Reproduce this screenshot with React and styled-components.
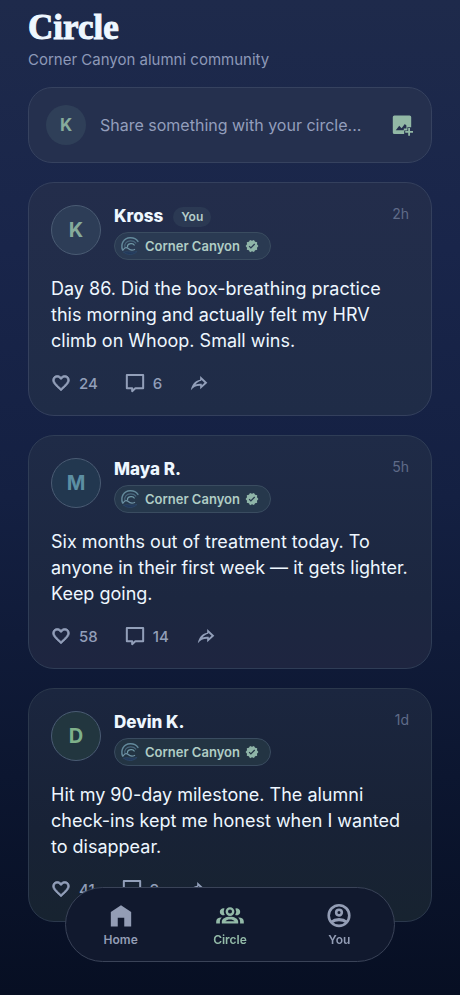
import React, { useState } from 'react';
import styled, { createGlobalStyle } from 'styled-components';

const GlobalStyle = createGlobalStyle`
  *, *::before, *::after {
    box-sizing: border-box;
  }

  body {
    margin: 0;
    background: #070f23;
    color: #eef7ff;
    font-family: Inter, "Liberation Sans", sans-serif;
  }

  button, input {
    font: inherit;
    color: inherit;
  }

  h1, h2, p {
    margin: 0;
  }
`;

const Page = styled.main`
  min-height: 100vh;
  padding: 10px 28px 72px;
  background: linear-gradient(180deg, #1e2a4b 0%, #19254a 25%, #142042 50%, #0c1630 78%, #070f23 100%);
`;

const Title = styled.h1`
  font-family: "Liberation Serif", serif;
  font-size: 35px;
  font-weight: 700;
  line-height: 36px;
  -webkit-text-stroke: 1px #eef7ff;
`;

const Subtitle = styled.p`
  margin-top: 4px;
  font-size: 15px;
  line-height: 20px;
  color: #8d99b8;
`;

const Feed = styled.div`
  display: flex;
  flex-direction: column;
  gap: 19px;
  margin-top: 17px;
`;

const Composer = styled.form`
  display: flex;
  align-items: center;
  gap: 14px;
  padding: 17px;
  border: 1px solid #36425f;
  border-radius: 24px;
  background: #25304e;
`;

const Avatar = styled.span`
  display: flex;
  flex: none;
  align-items: center;
  justify-content: center;
  width: ${({ $small }) => ($small ? 40 : 50)}px;
  height: ${({ $small }) => ($small ? 40 : 50)}px;
  border: ${({ $small }) => ($small ? '0' : '1px solid #4a5b73')};
  border-radius: 50%;
  background: ${({ $tint }) => $tint || '#2f3f58'};
  color: ${({ $color }) => $color || '#86ab9b'};
  font-size: ${({ $small }) => ($small ? 17 : 20)}px;
  font-weight: 700;
`;

const ShareInput = styled.input`
  flex: 1;
  min-width: 0;
  padding: 0;
  border: 0;
  outline: 0;
  background: none;
  font-size: 16px;
  line-height: 24px;

  &::placeholder {
    color: #939ebc;
    opacity: 1;
  }
`;

const IconButton = styled.button`
  display: flex;
  padding: 0;
  border: 0;
  background: none;
  color: #92b8a5;
  cursor: pointer;
`;

const Card = styled.article`
  padding: 22px;
  border: 1px solid ${({ $line }) => $line};
  border-radius: 26px;
  background: ${({ $fill }) => $fill};
`;

const CardHeader = styled.header`
  display: flex;
  align-items: flex-start;
  gap: 13px;
`;

const Author = styled.div`
  display: flex;
  flex: 1;
  flex-direction: column;
  align-items: flex-start;
  gap: 4px;
`;

const NameRow = styled.div`
  display: flex;
  align-items: center;
  gap: 10px;
  height: 23px;
`;

const Name = styled.h2`
  font-size: 17px;
  font-weight: 800;
  line-height: 23px;
`;

const YouChip = styled.span`
  padding: 0 8px;
  border-radius: 10px;
  background: #2b3953;
  color: #b5cdca;
  font-size: 12px;
  font-weight: 600;
  line-height: 20px;
`;

const Community = styled.span`
  display: flex;
  align-items: center;
  gap: 5px;
  height: 28px;
  padding: 0 11px 0 5px;
  border: 1px solid #3a4c60;
  border-radius: 14px;
  background: ${({ $tint }) => $tint};
  color: #b0cdc5;
  font-size: 13px;
  font-weight: 600;
`;

const Time = styled.time`
  color: #5f6b88;
  font-size: 14px;
  line-height: 18px;
`;

const Body = styled.p`
  margin-top: 16px;
  font-size: 18px;
  line-height: 26px;
`;

const Actions = styled.div`
  display: flex;
  align-items: center;
  gap: 27px;
  margin-top: 19px;
`;

const Action = styled.button`
  display: flex;
  align-items: center;
  gap: 8px;
  height: 20px;
  padding: 0;
  border: 0;
  background: none;
  color: #929fb9;
  font-size: 15px;
  font-weight: 500;
  cursor: pointer;
`;

const TabBar = styled.nav`
  position: fixed;
  right: 65px;
  bottom: 33px;
  left: 65px;
  display: flex;
  padding: 15px 0 12px;
  border: 1px solid #3a4358;
  border-radius: 38px;
  background: #11192e;
`;

const Tab = styled.a`
  display: flex;
  flex: 1;
  flex-direction: column;
  align-items: center;
  gap: 2px;
  color: ${({ $active }) => ($active ? '#93baa8' : '#939db5')};
  font-size: 12px;
  font-weight: 600;
  line-height: 18px;
  text-decoration: none;
`;

const Svg = ({ size = 20, children, ...rest }) => (
    <svg width={size} height={size} viewBox="0 0 24 24" fill="currentColor" aria-hidden="true" {...rest}>
        {children}
    </svg>
);

const HeartIcon = () => (
    <Svg>
        <path d="M16.5 3c-1.74 0-3.41.81-4.5 2.09C10.91 3.81 9.24 3 7.5 3 4.42 3 2 5.42 2 8.5c0 3.78 3.4 6.86 8.55 11.54L12 21.35l1.45-1.32C18.6 15.36 22 12.28 22 8.5 22 5.42 19.58 3 16.5 3zm-4.4 15.55l-.1.1-.1-.1C7.14 14.24 4 11.39 4 8.5 4 6.5 5.5 5 7.5 5c1.54 0 3.04.99 3.57 2.36h1.87C13.46 5.99 14.96 5 16.5 5c2 0 3.5 1.5 3.5 3.5 0 2.89-3.14 5.74-7.9 10.05z" stroke="currentColor" strokeWidth="0.9" />
    </Svg>
);

const CommentIcon = () => (
    <Svg fill="none" stroke="currentColor" strokeWidth="2.4" strokeLinejoin="round">
        <path d="M2.2 2.4h19.6v16h-9.4l-3.8 3.4v-3.4H2.2z" />
    </Svg>
);

const ShareIcon = () => (
    <Svg>
        <path fillRule="evenodd" d="M13.4 3.6L22 11.6L13.4 19.4V15.4C8.6 15.3 5.4 16.8 2.2 20.8C3.4 14 7 9 13.4 8zM14.8 9.4C11.6 10.2 9.4 11.6 7.8 13.8C10.2 13 12.2 12.8 15.3 13V14.6L18.6 11.6L14.8 8.2z" />
    </Svg>
);

const AddImageIcon = () => (
    <Svg size={24}>
        <path fillRule="evenodd" d="M4.4 2.4H19.6Q21.2 2.4 21.2 4V14.2H17.4V17.6H14.2V21H4.4Q2.8 21 2.8 19.4V4Q2.8 2.4 4.4 2.4zM5.8 17.2H13.8V15.4H16.4V12.6L14.8 11L11.6 15.2L9.2 12.8z" />
        <path d="M18.2 15H20V18H23V19.8H20V22.8H18.2V19.8H15.2V18H18.2z" />
    </Svg>
);

const VerifiedIcon = () => (
    <Svg size={14} fill="#8fb5a8">
        <path fillRule="evenodd" d="M23 12l-2.44-2.79.34-3.69-3.61-.82-1.89-3.2L12 2.96 8.6 1.5 6.71 4.69 3.1 5.5l.34 3.7L1 12l2.44 2.79-.34 3.7 3.61.82L8.6 22.5l3.4-1.47 3.4 1.46 1.89-3.19 3.61-.82-.34-3.69L23 12zm-12.91 4.72l-3.8-3.81 1.48-1.48 2.32 2.33 5.85-5.87 1.48 1.48-7.33 7.35z" />
    </Svg>
);

const CanyonLogo = () => (
    <Svg size={20} fill="none" strokeLinecap="round">
        <path d="M3 16.500C0.500 9.500 4.500 2.500 12 2.200C16 2 19.500 3.500 21.500 6.500" stroke="#63899b" strokeWidth="1.8" />
        <path d="M6 14C4.500 9.500 8 6 12.500 5.900C15 5.800 17.500 6.600 19 8.500" stroke="#48677d" strokeWidth="1.400" />
        <path d="M9 13C8.500 10.500 11 8.800 14 9.200C15.500 9.400 16.500 10 17 10.800" stroke="#6f98a6" strokeWidth="1.600" />
        <path d="M3.500 17C5.500 14 7.500 13 9.500 14.800S14 17.800 17.500 16.200" stroke="#6f93a5" strokeWidth="1.500" />
        <path d="M4.500 19.500C8 17.500 11 20.500 20.500 18.500C16.500 23 9 23.500 4.500 19.500z" fill="#22385a" stroke="#2d4767" strokeWidth="1" />
    </Svg>
);

const HomeIcon = () => (
    <Svg size={26}>
        <path d="M2.600 21.600V8.400L12 2L21.400 8.400V21.600H15V13.600H9V21.600z" />
    </Svg>
);

// wider than the other tab icons, same height
const GroupIcon = () => (
    <svg width="28" height="26" viewBox="0 0 28 26" fill="currentColor" aria-hidden="true">
        <circle cx="14" cy="8.600" r="3.200" fill="none" stroke="currentColor" strokeWidth="2.400" />
        <path d="M8.600 5.600A3.500 3.500 0 1 0 8.800 12A6.400 6.400 0 0 1 8.600 5.600zM19.400 5.600A3.500 3.500 0 1 1 19.200 12A6.400 6.400 0 0 0 19.400 5.600z" />
        <path fillRule="evenodd" d="M5.800 20.600V18.800C5.800 15.800 9.400 13.800 14 13.800S22.200 15.800 22.200 18.800V20.600zM9.400 18.300H18.600C17.600 17.200 16 16.600 14 16.600S10.400 17.200 9.400 18.300z" />
        <path d="M0.200 20.600V18.400C0.200 16 2.400 14.400 5.800 14.600C4.400 15.800 3.900 17.200 3.900 18.800V20.600zM27.800 20.600V18.400C27.800 16 25.600 14.400 22.200 14.600C23.600 15.800 24.100 17.200 24.100 18.800V20.600z" />
    </svg>
);

const PersonIcon = () => (
    <Svg size={26} fill="none" stroke="currentColor" strokeWidth="2.400">
        <circle cx="12" cy="11.600" r="9.500" />
        <circle cx="12" cy="8.800" r="2.600" />
        <path d="M5 17.600C8.600 14.600 15.400 14.600 19 17.600" strokeWidth="2.800" />
    </Svg>
);

const posts = [
    {
        initial: 'K', name: 'Kross', you: true, time: '2h', likes: 24, comments: 6,
        text: 'Day 86. Did the box-breathing practice this morning and actually felt my HRV climb on Whoop. Small wins.',
        color: '#86ab9b', tint: '#2d3d57', pill: '#2a3a52', line: '#34405d', fill: 'linear-gradient(#232d4b, #1f2c47)',
    },
    {
        initial: 'M', name: 'Maya R.', time: '5h', likes: 58, comments: 14,
        text: 'Six months out of treatment today. To anyone in their first week — it gets lighter. Keep going.',
        color: '#5c8fa3', tint: '#22374f', pill: '#26384c', line: '#2f3d56', fill: 'linear-gradient(#1f2b47, #1c2740 70%, #1e2540)',
    },
    {
        initial: 'D', name: 'Devin K.', time: '1d', likes: 41, comments: 9,
        text: 'Hit my 90-day milestone. The alumni check-ins kept me honest when I wanted to disappear.',
        color: '#7fb18a', tint: '#22363f', pill: '#233443', line: '#2b384c', fill: 'linear-gradient(#1b263f, #182236 60%, #172330)',
    },
];

const Post = ({ post }) => {
    const [liked, setLiked] = useState(false);

    return (
        <Card $fill={post.fill} $line={post.line}>
            <CardHeader>
                <Avatar $color={post.color} $tint={post.tint}>{post.initial}</Avatar>
                <Author>
                    <NameRow>
                        <Name>{post.name}</Name>
                        {post.you && <YouChip>You</YouChip>}
                    </NameRow>
                    <Community $tint={post.pill}>
                        <CanyonLogo />
                        Corner Canyon
                        <VerifiedIcon />
                    </Community>
                </Author>
                <Time>{post.time}</Time>
            </CardHeader>
            <Body>{post.text}</Body>
            <Actions>
                <Action type="button" aria-label="Like" aria-pressed={liked} onClick={() => setLiked(!liked)}>
                    <HeartIcon />
                    {post.likes + (liked ? 1 : 0)}
                </Action>
                <Action type="button" aria-label="Comment">
                    <CommentIcon />
                    {post.comments}
                </Action>
                <Action type="button" aria-label="Share">
                    <ShareIcon />
                </Action>
            </Actions>
        </Card>
    );
};

const App = () => {
    const [draft, setDraft] = useState('');

    return (
        <>
            <GlobalStyle />
            <Page>
                <Title>Circle</Title>
                <Subtitle>Corner Canyon alumni community</Subtitle>
                <Feed>
                    <Composer onSubmit={(e) => e.preventDefault()}>
                        <Avatar $small>K</Avatar>
                        <ShareInput
                            aria-label="Share something with your circle"
                            placeholder="Share something with your circle..."
                            value={draft}
                            onChange={(e) => setDraft(e.target.value)}
                        />
                        <IconButton type="button" aria-label="Add image">
                            <AddImageIcon />
                        </IconButton>
                    </Composer>
                    {posts.map((post) => <Post key={post.name} post={post} />)}
                </Feed>
            </Page>
            <TabBar>
                <Tab href="#home"><HomeIcon />Home</Tab>
                <Tab href="#circle" $active aria-current="page"><GroupIcon />Circle</Tab>
                <Tab href="#you"><PersonIcon />You</Tab>
            </TabBar>
        </>
    );
};

export default App;
